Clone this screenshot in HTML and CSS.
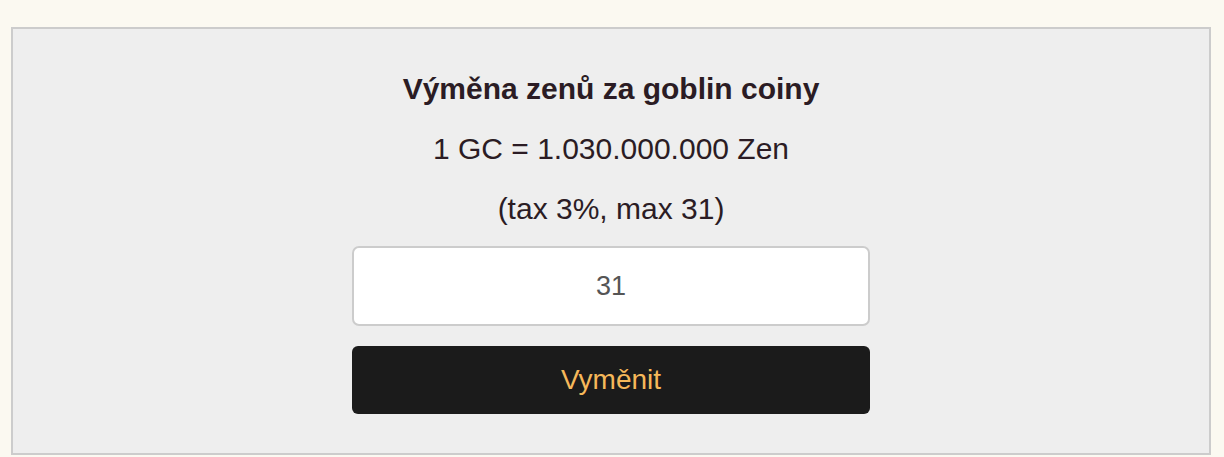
FILE: index.html
```html
<!DOCTYPE html>
<html lang="cs">
<head>
    <meta charset="UTF-8">
    <meta name="viewport" content="width=device-width, initial-scale=1.0">
    <title>Výměna zenů</title>
    <link rel="stylesheet" href="styles.css">
</head>
<body>
    <div class="page">
        <div class="exchange">
            <div class="title">Výměna zenů za goblin coiny</div>
            <div class="line">1 GC = 1.030.000.000 Zen</div>
            <div class="line">(tax 3%, max 31)</div>
            <form class="exchange-form">
                <input type="text" class="amount" value="31">
                <button type="submit">Vyměnit</button>
            </form>
        </div>
    </div>
</body>
</html>
```

FILE: styles.css
```css
/* Exchange page */
body {
    margin: 0;
    background-color: #fbf9f1;
    font-family: "Liberation Sans", Arial, sans-serif;
    color: #2b1c24;
}

.page {
    padding: 27px 13px 0 11px;
}

.exchange {
    background: #eeeeee;
    border: 2px solid #cccccc;
    padding: 30px 0 39px;
    text-align: center;
}

.title {
    font-weight: bold;
    font-size: 30px;
    line-height: 60px;
}

.line {
    font-size: 30px;
    line-height: 60px;
}

.exchange-form {
    width: 518px;
    margin: 7px auto 0;
    display: flex;
    flex-direction: column;
    gap: 20px;
}

.amount {
    box-sizing: border-box;
    height: 80px;
    border: 2px solid #cccccc;
    border-radius: 7px;
    background: white;
    font-family: inherit;
    font-size: 27px;
    color: #555555;
    text-align: center;
    outline: none;
}

button {
    height: 68px;
    border: none;
    border-radius: 6px;
    background-color: #1b1b1b;
    color: #f6b85a;
    font-family: inherit;
    font-size: 28px;
    cursor: pointer;
}
```
